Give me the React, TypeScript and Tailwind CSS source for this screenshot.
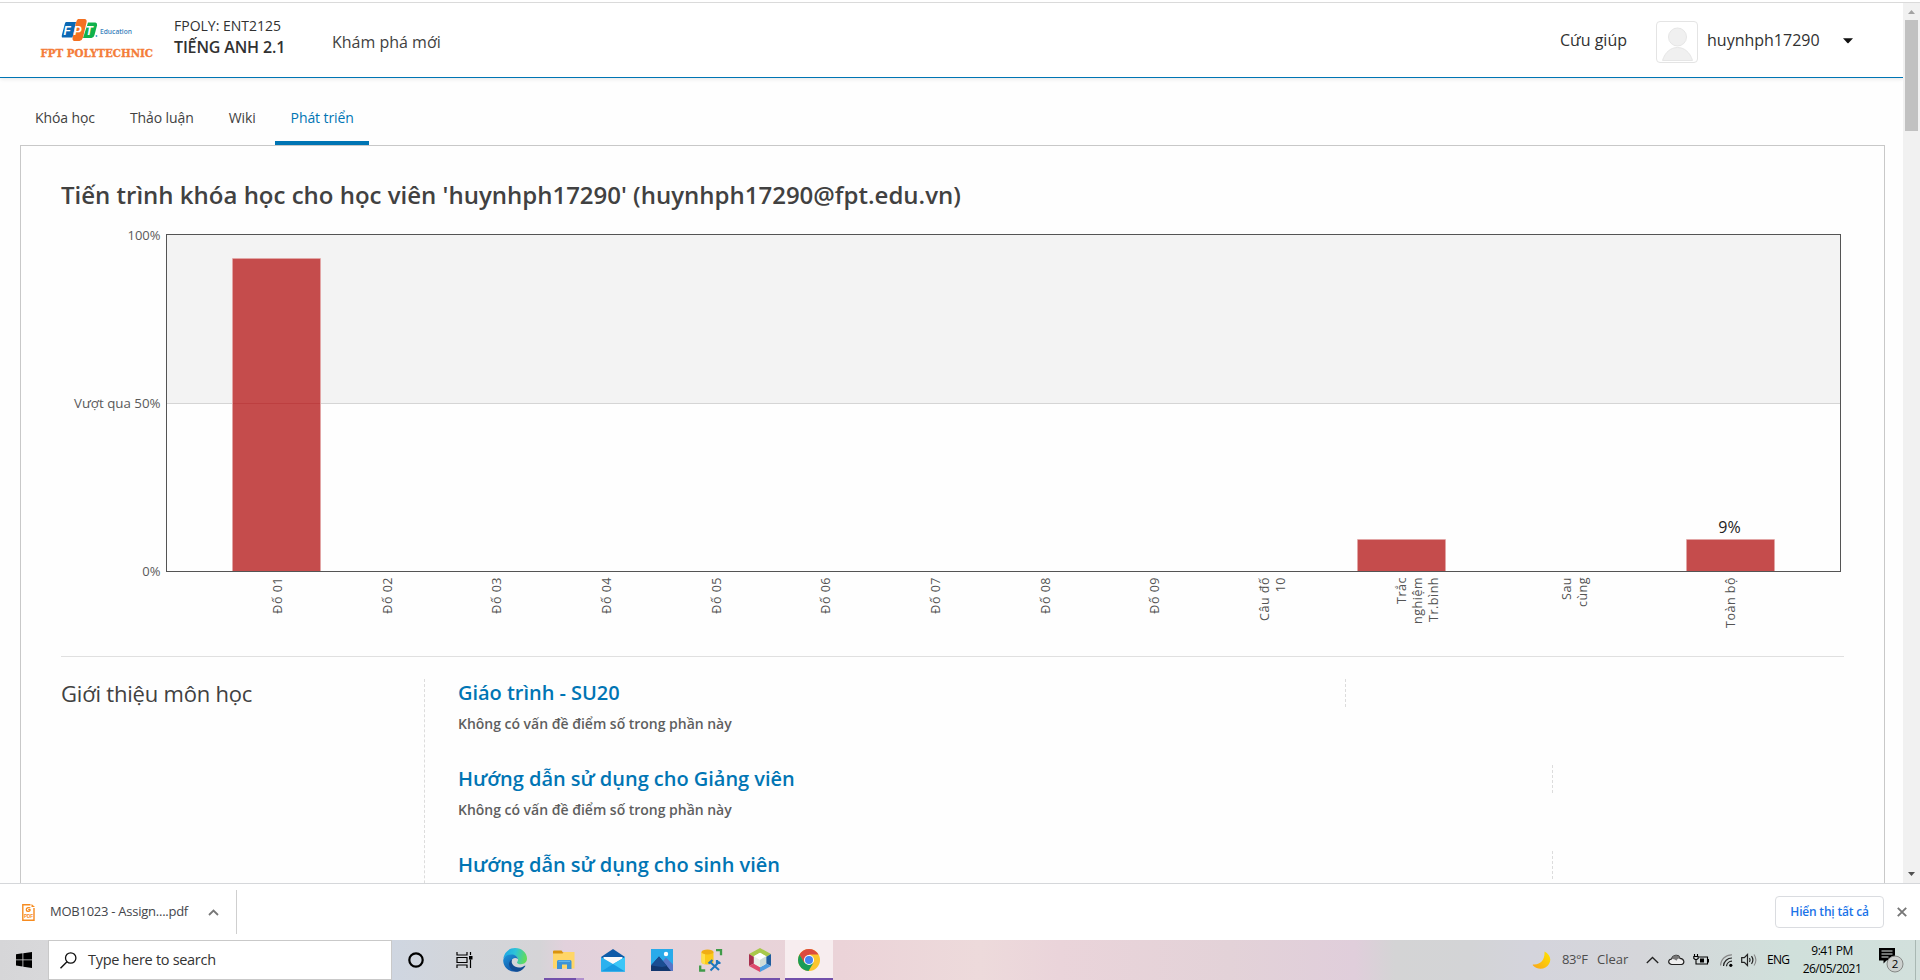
import React from "react";

type TickLabel = { x: number; lines: string[] };

const ticks: TickLabel[] = [
  { x: 277.5, lines: ["Đố 01"] },
  { x: 387, lines: ["Đố 02"] },
  { x: 496.8, lines: ["Đố 03"] },
  { x: 606.5, lines: ["Đố 04"] },
  { x: 716.1, lines: ["Đố 05"] },
  { x: 825.8, lines: ["Đố 06"] },
  { x: 935.4, lines: ["Đố 07"] },
  { x: 1045.1, lines: ["Đố 08"] },
  { x: 1154.7, lines: ["Đố 09"] },
  { x: 1264.4, lines: ["Câu đố", "10"] },
  { x: 1401, lines: ["Trắc", "nghiệm", "Tr.bình"] },
  { x: 1566, lines: ["Sau", "cùng"] },
  { x: 1730.5, lines: ["Toàn bộ"] },
];

const bars = [
  { x: 233, top: 259 },
  { x: 1358, top: 540 },
  { x: 1687, top: 540 },
];

function Logo() {
  return (
    <svg width="120" height="48" viewBox="38 18 120 48" className="-ml-0.5 shrink-0">
      <path d="M66 22h10l-3.500 15.500h-10.500q-.6-1 0-3l2.500-9.500q.6-3 1.500-3z" fill="#0a68b4" />
      <path d="M88 22.500h7.500q2 .5 1.500 3l-2.500 9.500q-.8 3-3 3h-8.500z" fill="#0fb14b" />
      <path d="M78 19h6.500q2.800.4 2 3.500l-3.500 15q-.8 3-3.500 3.500h-5.500q-2-.6-1.300-3.500l3.300-15q.8-3 2-3.500z" fill="#f37021" />
      <text x="63.500" y="34.500" fontFamily="Liberation Sans" fontWeight="700" fontStyle="italic" fontSize="12" fill="#fff">F</text>
      <text x="73.500" y="34.500" fontFamily="Liberation Sans" fontWeight="700" fontStyle="italic" fontSize="12" fill="#fff">P</text>
      <text x="85.500" y="34.500" fontFamily="Liberation Sans" fontWeight="700" fontStyle="italic" fontSize="12" fill="#fff">T</text>
      <circle cx="96.500" cy="36" r=".9" fill="#4b9bd0" />
      <text x="100" y="33.500" fontFamily="Open Sans" fontWeight="600" fontSize="7.500" textLength="32" lengthAdjust="spacingAndGlyphs" fill="#3b83bd">Education</text>
      <text x="40.500" y="56.800" fontFamily="DejaVu Serif" fontWeight="700" fontSize="11" textLength="112.500" lengthAdjust="spacingAndGlyphs" fill="#f47d3a" stroke="#f47d3a" strokeWidth=".35">FPT POLYTECHNIC</text>
    </svg>
  );
}

function Header() {
  return (
    <header className="flex h-[75px] shrink-0 border-b border-[#0075b4] bg-white pl-10 shadow-[0_1px_4px_rgba(0,0,0,0.1)]">
      <div className="h-[63px] w-[114px] pt-[15px]"><Logo /></div>
      <div className="ml-5 w-[158px] whitespace-nowrap pt-[13px] text-[#313131]">
        <div className="text-[14px] leading-[20px]">FPOLY: ENT2125</div>
        <div className="-mt-px text-[16px] font-semibold leading-[24px] tracking-[-0.15px]">TIẾNG ANH 2.1</div>
      </div>
      <div className="pt-[27px] text-[16px] leading-[24px] text-[#414141]">Khám phá mới</div>
      <div className="ml-auto flex pr-[50px] text-[#313131]">
        <div className="mr-[29px] pt-[25px] text-[16px] leading-[24px]">Cứu giúp</div>
        <div className="mt-[18px] h-[42px] w-[42px] rounded-[4px] border border-[#e4e4e4]">
          <svg width="40" height="40" viewBox="0 0 40 40">
            <circle cx="20.500" cy="15" r="9" fill="#f0f0f0" stroke="#e6e6e6" />
            <path d="M5.500 38.500C8 30 14 25.500 20.500 25.500S33 30 35.500 38.500z" fill="#f0f0f0" stroke="#e6e6e6" />
          </svg>
        </div>
        <div className="ml-[9px] w-[113px] pt-[25px] text-[16px] leading-[24px]">huynhph17290</div>
        <svg className="ml-[23px] mt-[35px]" width="10" height="6" viewBox="0 0 10 6"><path d="M0 .2h10L5.600 5q-.6.500-1.200 0z" fill="#111" /></svg>
      </div>
    </header>
  );
}

function Tabs() {
  return (
    <nav className="mt-[30px] flex h-[37px] gap-[3px] pl-[19px] text-[14px] leading-[20px] tracking-[-0.1px] text-[#414141]">
      <div className="px-4">Khóa học</div>
      <div className="px-4">Thảo luận</div>
      <div className="px-4">Wiki</div>
      <div className="w-[94px] whitespace-nowrap border-b-4 border-[#0075b4] pl-4 text-[#0075b4]">Phát triển</div>
    </nav>
  );
}

function GradeChart() {
  return (
    <svg className="block" width="1783" height="436" viewBox="61 220 1783 436" fontFamily="Open Sans">
      <rect x="166" y="234" width="1675" height="169" fill="#f3f3f3" />
      <rect x="166" y="403" width="1675" height="1" fill="#d5d5d5" />
      {bars.map((b) => (
        <g key={b.x}>
          <rect x={b.x} y={b.top} width="87" height={571 - b.top} fill="#c54c4c" />
          <path d={`M${b.x - 0.5} 571V${b.top - 0.5}h88V571`} fill="none" stroke="#e2a5a5" />
        </g>
      ))}
      <rect x="233" y="403" width="87" height="1" fill="#bd3f40" />
      <rect x="166.500" y="234.500" width="1674" height="337" fill="none" stroke="#545454" />
      <g fontSize="13" fill="#5a5a5a" textAnchor="end">
        <text x="160.500" y="240">100%</text>
        <text x="160.500" y="407.500" fontSize="13.300">Vượt qua 50%</text>
        <text x="160.500" y="575.500">0%</text>
      </g>
      <text x="1729.500" y="533" fontSize="16" fill="#222" textAnchor="middle">9%</text>
      <g fontSize="12.500" letterSpacing=".5" fill="#545454" textAnchor="end">
        {ticks.map((t) =>
          t.lines.map((line, i) => (
            <text key={line} transform={`translate(${t.x + i * 16 + 4.5} 577) rotate(-90)`}>{line}</text>
          )),
        )}
      </g>
    </svg>
  );
}

function Section({ title, note, wide }: { title: string; note?: string; wide?: boolean }) {
  return (
    <div className="flex h-[86px] shrink-0">
      <div className={wide ? "w-[887px]" : "w-[1094px]"}>
        <div className="text-[20px] font-semibold leading-[28px] tracking-[-0.03px] text-[#0075b4]">{title}</div>
        {note && <div className="mt-[7px] text-[14px] font-semibold leading-[20px] tracking-[-0.02px] text-[#5e5e5e]">{note}</div>}
      </div>
      <div className="h-[28px] border-l border-dashed border-[#dcdcdc]" />
    </div>
  );
}

function Scrollbar() {
  return (
    <div className="flex w-[17px] shrink-0 flex-col items-center bg-[#f1f1f1]">
      <svg width="17" height="17" viewBox="0 0 17 17"><path d="M5 11l3.500-4 3.500 4z" fill="#a3a3a3" /></svg>
      <div className="h-[111px] w-[13px] bg-[#c1c1c1]" />
      <svg className="mt-auto" width="17" height="17" viewBox="0 0 17 17"><path d="M5 6l3.500 4L12 6z" fill="#505050" /></svg>
    </div>
  );
}

function DownloadShelf() {
  return (
    <div className="flex h-[57px] shrink-0 items-center border-t border-[#d5d7da] bg-white">
      <svg className="ml-[22px]" width="13" height="17" viewBox="0 0 13 17">
        <path d="M8.500.8H.8v15.400h11.200V4" fill="none" stroke="#f68b1f" strokeWidth="1.400" />
        <path d="M9.500 0v3H13z" fill="#f68b1f" />
        <path d="M8.300 3.800C6 3 4.200 4.200 4.300 5.900c.1 1.700 2.800 1.900 3.700.7V5.600H6.200" fill="none" stroke="#f68b1f" strokeWidth="1.300" />
        <text x="1.900" y="14.200" fontFamily="Liberation Sans" fontSize="5.500" fontWeight="700" textLength="9.200" lengthAdjust="spacingAndGlyphs" fill="#f68b1f">PDF</text>
      </svg>
      <div className="ml-[15px] w-[140px] whitespace-nowrap text-[13px] tracking-[-0.25px] text-[#44464b]">MOB1023 - Assign....pdf</div>
      <svg className="ml-[18px]" width="11" height="7" viewBox="0 0 11 7"><path d="M1 6l4.500-4.500L10 6" fill="none" stroke="#777" strokeWidth="1.800" /></svg>
      <div className="ml-[17px] h-[44px] w-px bg-[#cfcfcf]" />
      <div className="ml-auto flex h-8 w-[109px] items-center justify-center rounded-[4px] border border-[#dadce0] text-[12px] font-semibold tracking-[-0.2px] text-[#1a73e8]">Hiển thị tất cả</div>
      <svg className="ml-[13px] mr-[13px]" width="10" height="10" viewBox="0 0 10 10"><path d="M.8.8l8.400 8.400M9.200.8L.8 9.200" stroke="#777" strokeWidth="1.900" /></svg>
    </div>
  );
}

function EdgeIcon() {
  return (
    <svg width="24" height="24" viewBox="0 0 24 24">
      <defs>
        <linearGradient id="edgeTop" x1="0" x2="1" y1=".2" y2=".4"><stop offset="0" stopColor="#1ba4e6" /><stop offset=".5" stopColor="#2ec3d8" /><stop offset="1" stopColor="#62dc5a" /></linearGradient>
        <linearGradient id="edgeSide" x1="0" x2=".6" y1="0" y2="1"><stop offset="0" stopColor="#1c96dc" /><stop offset="1" stopColor="#1254a5" /></linearGradient>
      </defs>
      <path d="M.3 11C1 4.500 6 0 12 0c7 0 12 5 12 10.500 0 4-3 5.700-6 5.700-2.600 0-4-1-4-1.800 0-.7 1-1 1-3C15 9 12.500 7 9 7 4.500 7 1 9 .3 11z" fill="url(#edgeTop)" />
      <path d="M.2 12C1 8.500 4.500 6.500 8.500 6.500c3.500 0 6 2 6.500 4.500-1-.8-2-1-3-1-2.500 0-4 2.300-4 5 0 4.500 4.500 8 8 8.200C9 25.500 0 21 .2 12z" fill="url(#edgeSide)" />
      <path d="M9 11.500c-1.500 4 2 8 7 8 2.500 0 4.500-1 5.700-1.800.5-.3.800.1.500.5C20.500 21 17.500 23.600 14 23.600c-4.500 0-8-4-8-7.500 0-2 1.200-3.700 3-4.600z" fill="#124d93" />
    </svg>
  );
}

function FolderIcon() {
  return (
    <svg width="22" height="20" viewBox="0 0 22 20">
      <path d="M0 1.500Q0 .5 1 .5h7.500L10 2.500h11v4H0z" fill="#d9930e" />
      <path d="M0 3.500h9.500L11 2h10.500v16.500H0z" fill="#ffd667" />
      <path d="M4 19v-7.500q0-1.500 1.500-1.500h11.500q1.500 0 1.500 1.500V19h-4.500v-4.500h-5V19z" fill="#3d93d6" />
      <path d="M5.500 11.300h11.500" stroke="#63b7ee" strokeWidth="1.300" />
    </svg>
  );
}

function MailIcon() {
  return (
    <svg width="24" height="23" viewBox="0 0 24 23">
      <path d="M0 8L12 0l12 8v4H0z" fill="#0e5ba8" />
      <path d="M2.500 8h19v7L12 19l-9.500-4z" fill="#fafafa" />
      <path d="M0 8l12 7 12-7v14.500H0z" fill="#2cb1ee" />
      <path d="M24 8L0 22.500h24z" fill="#3bc6f7" />
      <path d="M0 22.500L12 15l12 7.500z" fill="#189be2" />
    </svg>
  );
}

function PhotosIcon() {
  return (
    <svg width="22" height="22" viewBox="0 0 22 22">
      <path d="M0 0h22v22H0z" fill="#29aaea" />
      <path d="M12 12l3-3.500 7 7V22h-6z" fill="#5877c8" />
      <path d="M0 16.500L8 7.500 20 22H0z" fill="#12376f" />
      <path d="M0 16.500L8 7.500l8 9.500-5 1z" fill="#1b4d92" />
      <circle cx="15" cy="5" r="2.200" fill="#fff" />
    </svg>
  );
}

function DatabaseIcon() {
  return (
    <svg width="24" height="23" viewBox="0 0 24 23">
      <path d="M2.500 3v10c0 1.600 2.600 2.500 6 2.500s6-.9 6-2.500V3z" fill="#fcca18" />
      <path d="M2.500 3v10c0 1.300 1.500 2 3.500 2.300V3z" fill="#ffdf4c" />
      <ellipse cx="8.500" cy="3" rx="6" ry="2.500" fill="#f0ad14" />
      <path d="M17 1.200h5v5M1.200 16.500v5h5" fill="none" stroke="#3f9b49" strokeWidth="2.300" />
      <path d="M11 13l9 8M20.500 12.500l-9 9" stroke="#1f77bd" strokeWidth="2" />
      <path d="M9.500 14.500l4-3.500M18 11v3h3.500" fill="none" stroke="#1f77bd" strokeWidth="2.200" />
    </svg>
  );
}

function CubeIcon() {
  return (
    <svg width="22" height="24" viewBox="0 0 22 24">
      <path d="M11 0l11 6-5 3-6-3.500L5 9 0 6z" fill="#a9c94b" />
      <path d="M0 6l5 3v6.500L0 18z" fill="#a82f4e" />
      <path d="M0 18l5-2.500 6 3.500v5z" fill="#de4a6d" />
      <path d="M22 6l-5 3v6.500L22 18z" fill="#1f5d9e" />
      <path d="M22 18l-5-2.500-6 3.500v5z" fill="#4c9be0" />
      <path d="M11 4.800l6.200 3.500v7.500L11 19.300l-6.200-3.500V8.300z" fill="#e9f0ea" />
      <path d="M4.800 8.300L11 4.800l6.200 3.500L11 12z" fill="#fff" />
      <path d="M11 12l6.200-3.700v7.500L11 19.300z" fill="#cfdcd8" />
    </svg>
  );
}

function ChromeIcon() {
  return (
    <svg width="22" height="22" viewBox="0 0 22 22">
      <circle cx="11" cy="11" r="11" fill="#fbc62c" />
      <path d="M1.500 5.500A11 11 0 0 1 20.500 5.500H11L6 14z" fill="#dd4b3e" />
      <path d="M1.500 5.500A11 11 0 0 0 10.500 22l5-8.300L6.300 13.700z" fill="#1a9c58" />
      <circle cx="11" cy="11" r="5" fill="#fff" />
      <circle cx="11" cy="11" r="4" fill="#4684f0" />
    </svg>
  );
}

function TaskItem({ children, bar, active }: { children: React.ReactNode; bar?: string; active?: boolean }) {
  return (
    <div className={active ? "flex h-10 w-12 flex-col bg-[#f7edef]" : "flex h-10 w-12 flex-col"}>
      <div className="flex h-[38px] items-center justify-center pt-[2px]">{children}</div>
      {bar && <div className={bar} />}
    </div>
  );
}

function SystemTray() {
  return (
    <div className="ml-auto flex h-10 items-center text-black">
      <svg width="19" height="19" viewBox="0 0 19 19">
        <defs><linearGradient id="moon" x1="1" x2="0" y1="0" y2="1"><stop offset="0" stopColor="#ffe500" /><stop offset="1" stopColor="#f9a51b" /></linearGradient></defs>
        <path d="M12.500.5c5 2.500 7.500 7.500 4.500 12.500S6.500 20 1 14.500c-.5-.6-.3-1 .5-1C9 14 13 8 12.500.5z" fill="url(#moon)" />
      </svg>
      <div className="ml-[11px] w-[29px] whitespace-nowrap text-[13px] tracking-[-0.4px] text-[#4c4c4c]">83°F</div>
      <div className="ml-[6px] w-[33px] text-[13px] text-[#4c4c4c]">Clear</div>
      <svg className="ml-[16px]" width="13" height="8" viewBox="0 0 13 8"><path d="M.8 7l5.700-5.500L12.200 7" fill="none" stroke="#222" strokeWidth="1.300" /></svg>
      <svg className="ml-[9px]" width="17" height="12" viewBox="0 0 17 12">
        <path d="M3.500 10.500C-.5 9.500 0 5.500 3.500 5 5 .5 10.500-.2 12 4.300c4.500.2 5 5.500 1.500 6.200z" fill="#eee" stroke="#222" strokeWidth="1.200" />
        <path d="M3.500 5C5 .5 10.500-.2 12 4.300c-2 .2-3 1.200-3.500 2.400C6.500 5 5.500 5 3.500 5z" fill="#777" />
      </svg>
      <svg className="ml-[8px]" width="16" height="12" viewBox="0 0 16 12">
        <path d="M6 3h8.500v7H6M15.500 5v3.500M1.500 0v2.500M4.500 0v2.500M.8 2.500h4.400v2L3 6 .8 4.500zM3 6v4h3" fill="none" stroke="#000" strokeWidth="1.100" />
        <path d="M7 4.500h4v4H7z" />
      </svg>
      <svg className="ml-[11px]" width="13" height="13" viewBox="0 0 13 13">
        <path d="M.6 11.500A11 11 0 0 1 12 .8" fill="none" stroke="#888" strokeWidth="1.200" />
        <path d="M3.500 12A8.500 8.500 0 0 1 12 4M6.500 12.300A5.500 5.500 0 0 1 12 7.200" fill="none" stroke="#222" strokeWidth="1.200" />
        <circle cx="10.800" cy="11.300" r="1.600" />
      </svg>
      <svg className="ml-[8px]" width="16" height="14" viewBox="0 0 16 14">
        <path d="M.7 4.700h2.600L6.500 1.500v11L3.300 9.300H.7z" fill="none" stroke="#222" strokeWidth="1.200" />
        <path d="M8.500 5q1.200 2 0 4M10.500 3.200q2.800 3.800 0 7.600" fill="none" stroke="#222" strokeWidth="1.200" />
        <path d="M13 1.500q3.800 5.500 0 11" fill="none" stroke="#888" strokeWidth="1.100" />
      </svg>
      <div className="ml-[10px] w-[23px] text-[12px] tracking-[-0.7px]">ENG</div>
      <div className="ml-[12px] w-[60px] whitespace-nowrap text-center text-[12px] leading-[18px] tracking-[-0.5px]">
        <div>9:41 PM</div>
        <div>26/05/2021</div>
      </div>
      <svg className="ml-[17px] mr-[11px]" width="25" height="25" viewBox="0 0 25 25">
        <path d="M0 0h16v12.500H7.500L4.500 15.500v-3H0z" />
        <path d="M2.500 3h11M2.500 6h11M2.500 9h7" stroke="#dfe8e5" strokeWidth="1.200" />
        <circle cx="16" cy="16" r="8" fill="#cdd1cf" stroke="#858886" />
        <text x="16" y="20" textAnchor="middle" fontFamily="Open Sans" fontSize="11.500">2</text>
      </svg>
      <div className="mr-[4px] h-10 w-px bg-[#a9b8b3]" />
    </div>
  );
}

function Taskbar() {
  return (
    <div className="flex h-10 shrink-0 items-center bg-[linear-gradient(90deg,#d6d6d8_0px,#d8d8da_45px,#cfd6e1_392px,#d3d5d9_470px,#d5d4d7_540px,#e2d1dc_565px,#e5d3da_640px,#e7d3d9_740px,#ebd3d8_840px,#eddadb_980px,#ead4da_1060px,#e3d2d8_1230px,#e0cedb_1355px,#d4d4d5_1395px,#d3d4d6_1470px,#d4d4dc_1530px,#d5d6da_1640px,#d0e0db_1790px,#d2e0dc_1920px)]">
      <div className="flex w-12 justify-center">
        <svg width="16" height="16" viewBox="0 0 16 16"><path d="M0 2.200l6.500-.9v6.200H0zM7.300 1.200L16 0v7.500H7.300zM0 8.300h6.500v6.200L0 13.600zM7.300 8.300H16V16l-8.700-1.200z" /></svg>
      </div>
      <div className="flex h-10 w-[344px] items-center border border-[#c9c9c9] bg-white pl-[11px]">
        <svg width="17" height="17" viewBox="0 0 17 17"><circle cx="10.700" cy="6" r="5.200" fill="none" stroke="#111" strokeWidth="1.300" /><path d="M7 9.800L.5 16.300" stroke="#111" strokeWidth="1.400" /></svg>
        <div className="ml-[11px] text-[14.5px] tracking-[-0.3px] text-[#333]">Type here to search</div>
      </div>
      <TaskItem><svg width="16" height="16" viewBox="0 0 16 16"><circle cx="8" cy="8" r="6.700" fill="none" stroke="#000" strokeWidth="2.200" /></svg></TaskItem>
      <TaskItem>
        <svg width="17" height="16" viewBox="0 0 17 16"><path d="M1 0v3h10V0M1 5.500h10v5H1zM1 16v-3h10v3M14.500 0v3M14.500 7.500V16" fill="none" stroke="#000" strokeWidth="1.200" /><path d="M13 4h3.500v3.500H13z" /></svg>
      </TaskItem>
      <div className="ml-[3px] flex gap-px">
        <TaskItem><EdgeIcon /></TaskItem>
        <TaskItem bar="ml-1 h-[2px] w-10 bg-[linear-gradient(90deg,#7350ab_32px,#b08fcd_32px)]"><FolderIcon /></TaskItem>
        <TaskItem><MailIcon /></TaskItem>
        <TaskItem><PhotosIcon /></TaskItem>
        <TaskItem><DatabaseIcon /></TaskItem>
        <TaskItem bar="ml-1 h-[2px] w-10 bg-[#7350ab]"><CubeIcon /></TaskItem>
        <TaskItem active bar="h-[2px] w-12 bg-[#7350ab]"><ChromeIcon /></TaskItem>
      </div>
      <SystemTray />
    </div>
  );
}

export default function App() {
  return (
    <div className="flex h-[980px] w-[1920px] flex-col overflow-hidden bg-white font-['Open_Sans','Noto_Sans',sans-serif]">
      <div className="flex h-[883px] shrink-0 border-t border-white">
        <div className="flex w-full pt-px">
          <div className="flex w-[1903px] flex-col overflow-hidden border-t border-[#dadada] bg-[#fefefe]">
            <Header />
            <Tabs />
            <main className="ml-5 h-[738px] w-[1865px] shrink-0 overflow-hidden border border-b-0 border-[#c8c8c8] bg-[#fefefe] pl-10">
              <h1 className="h-[74px] pt-[32px] text-[24px] font-semibold leading-[34px] text-[#414141]">
                Tiến trình khóa học cho học viên 'huynhph17290' (huynhph17290@fpt.edu.vn)
              </h1>
              <GradeChart />
              <div className="w-[1783px] border-t border-[#e0e0e0] pt-[22px]">
                <div className="flex h-[300px]">
                  <h2 className="-mt-px w-[363px] text-[22px] leading-[30px] tracking-[-0.2px] text-[#414141]">Giới thiệu môn học</h2>
                  <div className="flex flex-col border-l border-dashed border-[#dcdcdc] pl-[33px]">
                    <Section wide title="Giáo trình - SU20" note="Không có vấn đề điểm số trong phần này" />
                    <Section title="Hướng dẫn sử dụng cho Giảng viên" note="Không có vấn đề điểm số trong phần này" />
                    <Section title="Hướng dẫn sử dụng cho sinh viên" />
                  </div>
                </div>
              </div>
            </main>
          </div>
          <div className="flex border-t border-[#dadada]"><Scrollbar /></div>
        </div>
      </div>
      <DownloadShelf />
      <Taskbar />
    </div>
  );
}
